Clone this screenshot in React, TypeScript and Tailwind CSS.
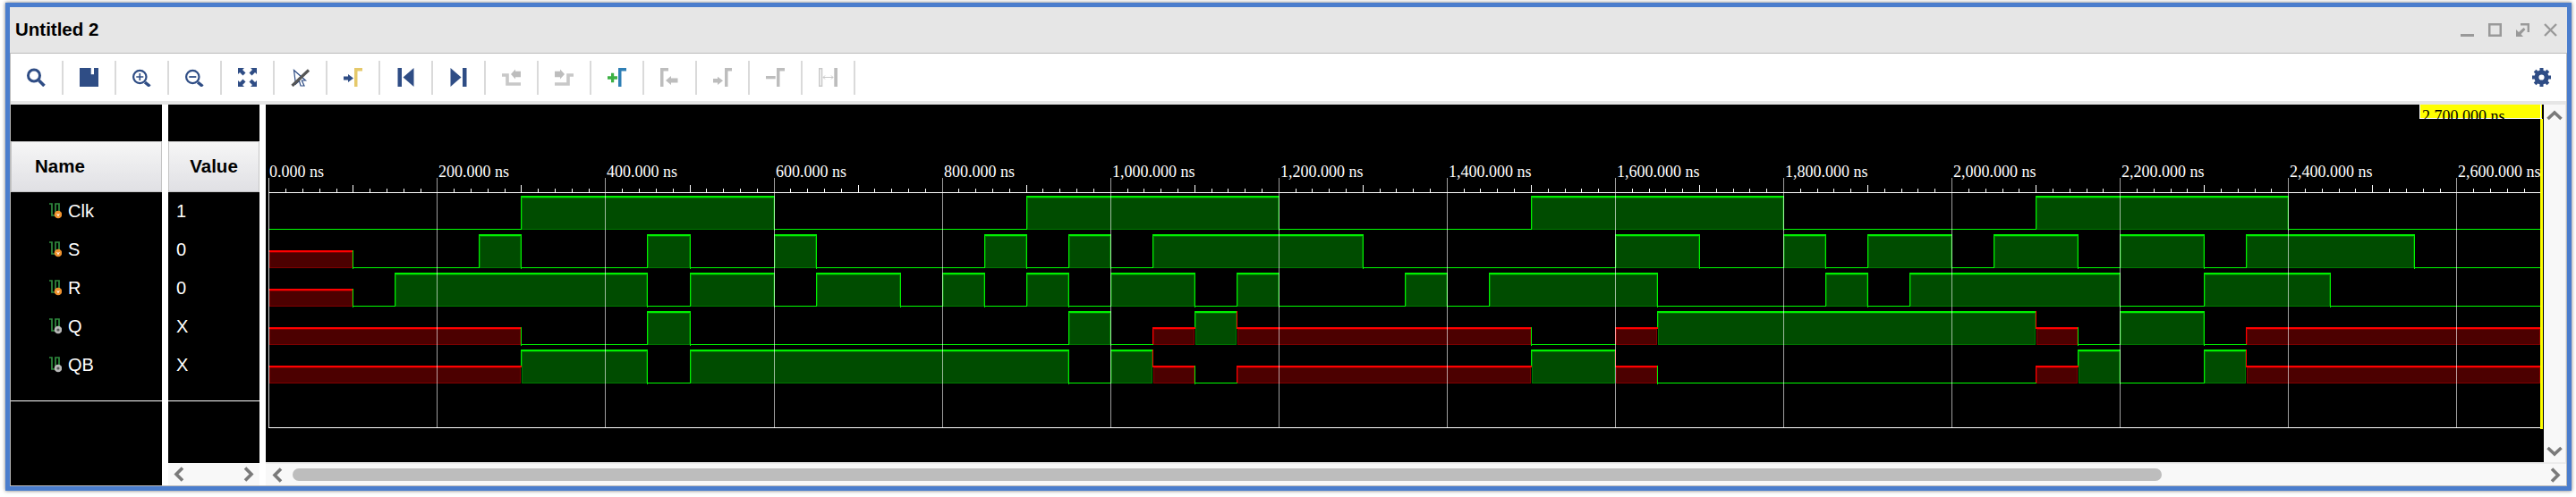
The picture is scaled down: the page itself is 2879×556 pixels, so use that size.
import type { ReactNode } from 'react';

type State = '0' | '1' | 'x';
type Edge = [number, State];

const NAVY = '#2f4d85';
const GRAY = '#bdbdbd';

// edges are [time in ns, new value]
const clk: Edge[] = [
  [0, '0'], [300, '1'], [600, '0'], [900, '1'], [1200, '0'], [1500, '1'], [1800, '0'], [2100, '1'], [2400, '0'],
];
const s: Edge[] = [
  [0, 'x'], [100, '0'], [250, '1'], [300, '0'], [450, '1'], [500, '0'], [600, '1'], [650, '0'], [850, '1'],
  [900, '0'], [950, '1'], [1000, '0'], [1050, '1'], [1300, '0'], [1600, '1'], [1700, '0'], [1800, '1'],
  [1850, '0'], [1900, '1'], [2000, '0'], [2050, '1'], [2150, '0'], [2200, '1'], [2300, '0'], [2350, '1'], [2550, '0'],
];
const r: Edge[] = [
  [0, 'x'], [100, '0'], [150, '1'], [450, '0'], [500, '1'], [600, '0'], [650, '1'], [750, '0'], [800, '1'],
  [850, '0'], [900, '1'], [950, '0'], [1000, '1'], [1100, '0'], [1150, '1'], [1200, '0'], [1350, '1'],
  [1400, '0'], [1450, '1'], [1650, '0'], [1850, '1'], [1900, '0'], [1950, '1'], [2200, '0'], [2300, '1'], [2450, '0'],
];
const q: Edge[] = [
  [0, 'x'], [300, '0'], [450, '1'], [500, '0'], [950, '1'], [1000, '0'], [1050, 'x'], [1100, '1'], [1150, 'x'],
  [1500, '0'], [1600, 'x'], [1650, '1'], [2100, 'x'], [2150, '0'], [2200, '1'], [2300, '0'], [2350, 'x'],
];
const qb: Edge[] = [
  [0, 'x'], [300, '1'], [450, '0'], [500, '1'], [950, '0'], [1000, '1'], [1050, 'x'], [1100, '0'], [1150, 'x'],
  [1500, '1'], [1600, 'x'], [1650, '0'], [2100, 'x'], [2150, '1'], [2200, '0'], [2300, '1'], [2350, 'x'],
];

const signals = [
  { name: 'Clk', value: '1', edges: clk, input: true },
  { name: 'S', value: '0', edges: s, input: true },
  { name: 'R', value: '0', edges: r, input: true },
  { name: 'Q', value: 'X', edges: q, input: false },
  { name: 'QB', value: 'X', edges: qb, input: false },
];

const END = 2700;
const tx = (t: number) => Math.floor(3.8 + t * 0.9404);

const majors = Array.from({ length: 14 }, (_, i) => i * 200);
const ticks = Array.from({ length: 135 }, (_, i) => i * 20 + 20);

function formatTime(t: number) {
  return `${t.toLocaleString('en-US')}.000 ns`;
}

function Trace({ edges, index }: { edges: Edge[]; index: number }) {
  const top = 103 + index * 43;
  const low = top + 36.5;
  const mid = top + 18;
  const level = (v: State) => (v === '1' ? top : v === '0' ? low : mid);

  return (
    <g>
      {edges.map(([t, v], i) => {
        const x1 = tx(t);
        const x2 = tx(i + 1 < edges.length ? edges[i + 1][0] : END);
        const prev = i > 0 ? edges[i - 1][1] : null;
        const bright = v === 'x' ? '#ff0000' : '#00f000';
        return (
          <g key={t}>
            {v === '1' && <rect x={x1 + 1.5} y={top + 1} width={x2 - x1 - 2} height={35} fill="#004c00" stroke="#007800" />}
            {v === 'x' && <rect x={x1 + 1.5} y={mid + 1} width={x2 - x1 - 2} height={17} fill="#4c0000" stroke="#800000" />}
            {v === '0' ? (
              <line x1={x1} x2={x2 + 1} y1={low} y2={low} stroke="#00ff00" />
            ) : (
              <line x1={x1} x2={x2 + 1} y1={level(v)} y2={level(v)} stroke={bright} strokeWidth={2} />
            )}
            {prev && prev !== v && (
              <line x1={x1 + 0.5} x2={x1 + 0.5} y1={level(prev) - 1} y2={level(v) + 1} stroke={bright} />
            )}
          </g>
        );
      })}
    </g>
  );
}

function WaveChart() {
  return (
    <svg width={2546} height={400} className="block shrink-0 bg-black" shapeRendering="crispEdges">
      {signals.map((sig, i) => (
        <Trace key={sig.name} edges={sig.edges} index={i} />
      ))}
      {majors.map((t) => (
        <line key={t} x1={tx(t) + 0.5} x2={tx(t) + 0.5} y1={82} y2={362} stroke="#fff" strokeOpacity={t === 0 ? 0.85 : 0.62} />
      ))}
      {ticks.map((t) =>
        t % 200 === 0 ? null : (
          <line key={t} x1={tx(t) + 0.5} x2={tx(t) + 0.5} y1={t % 100 === 0 ? 90 : 94} y2={98} stroke="#fff" />
        ),
      )}
      <line x1={3} x2={2542} y1={98.5} y2={98.5} stroke="#fff" />
      <line x1={3} x2={2542} y1={361.5} y2={361.5} stroke="#fff" />
      {majors.map((t) => (
        <text
          key={t}
          x={tx(t) + (t === 0 ? 1 : 2)}
          y={81}
          className="fill-white font-['Liberation_Serif'] text-[18px]"
          textRendering="optimizeSpeed"
        >
          {formatTime(t)}
        </text>
      ))}
      <rect x={2542} y={16} width={3} height={347} fill="#ffff00" />
      <svg x={2407} y={0} width={137} height={16}>
        <rect width={137} height={16} fill="#ffff00" />
        <rect width={1} height={16} fill="#fff" />
        <rect y={15} width={137} height={1} fill="#fff" />
        <rect x={135} width={1} height={16} fill="#fff" />
        <text x={3} y={19} className="fill-black font-['Liberation_Serif'] text-[18px]">
          2,700.000 ns
        </text>
      </svg>
    </svg>
  );
}

function Ic({ children }: { children: ReactNode }) {
  return (
    <svg width={21} height={21} viewBox="0 0 21 21">
      {children}
    </svg>
  );
}

const GAMMA_RIGHT = 'M12 0H21V3.5H15.5V21H12Z';

const tools: ReactNode[] = [
  <Ic>
    <circle cx={8} cy={8.5} r={6.5} fill="none" stroke={NAVY} strokeWidth={3} />
    <path d="M13.5 14L19.5 20" stroke={NAVY} strokeWidth={3.5} />
  </Ic>,
  <Ic>
    <path d="M0 0H21V21H0Z" fill={NAVY} />
    <rect x={12.7} width={3.3} height={7.2} fill="#fff" />
  </Ic>,
  <Ic>
    <circle cx={8.3} cy={10} r={7.2} fill="none" stroke={NAVY} strokeWidth={2.2} />
    <path d="M4.3 10H12.3M8.3 6V14" stroke={NAVY} strokeWidth={1.6} />
    <path d="M14 16L19.5 20.5" stroke={NAVY} strokeWidth={3.5} />
  </Ic>,
  <Ic>
    <circle cx={8.3} cy={10} r={7.2} fill="none" stroke={NAVY} strokeWidth={2.2} />
    <path d="M4.3 10H12.3" stroke={NAVY} strokeWidth={1.8} />
    <path d="M14 16L19.5 20.5" stroke={NAVY} strokeWidth={3.5} />
  </Ic>,
  <Ic>
    {[0, 90, 180, 270].map((a) => (
      <path key={a} d="M0 0H7L5 2L8.5 5.5L5.5 8.5L2 5L0 7Z" fill={NAVY} transform={`rotate(${a} 10.5 10.5)`} />
    ))}
  </Ic>,
  <Ic>
    <path d="M3.5 2.5L16.5 14H12.3L15 20H11L9.5 14.5L5.5 18Z" fill="#fff" stroke={NAVY} strokeWidth={1.2} />
    <path d="M1.5 20L20 2.5" stroke="#555" strokeWidth={3.2} />
  </Ic>,
  <Ic>
    <path d="M0 9.5H5V7L11 11.5L5 16V13.5H0Z" fill={NAVY} />
    <path d={GAMMA_RIGHT} fill="#e5c96b" />
  </Ic>,
  <Ic>
    <rect x={1.5} width={4.5} height={21} fill={NAVY} />
    <path d="M19.5 0V21L7.5 10.5Z" fill={NAVY} />
  </Ic>,
  <Ic>
    <path d="M1.5 0V21L13.5 10.5Z" fill={NAVY} />
    <rect x={15} width={4.5} height={21} fill={NAVY} />
  </Ic>,
  <Ic>
    <path d="M0 8H6V18H21" fill="none" stroke="#c8c8c8" strokeWidth={3.6} />
    <path d="M10 7L15 1.5V3.7H21V10.3H15V12.5Z" fill={GRAY} />
  </Ic>,
  <Ic>
    <g transform="translate(21 0) scale(-1 1)">
      <path d="M0 8H6V18H21" fill="none" stroke="#c8c8c8" strokeWidth={3.6} />
      <path d="M10 7L15 1.5V3.7H21V10.3H15V12.5Z" fill={GRAY} />
    </g>
  </Ic>,
  <Ic>
    <path d="M4 5.7H7.2V9.3H11V12.7H7.2V16.3H4V12.7H0V9.3H4Z" fill="#3cb043" />
    <path d={GAMMA_RIGHT} fill="#2f7fb5" />
  </Ic>,
  <Ic>
    <path d="M0 0H9V3.5H3.5V21H0Z" fill={GRAY} />
    <path d="M6 14L12 9V11.5H19.5V16.5H12V19Z" fill={GRAY} />
  </Ic>,
  <Ic>
    <path d="M0 12H5V9.7L11 14.3L5 19V16.5H0Z" fill={GRAY} />
    <path d="M13 0H21V3.5H16.5V21H13Z" fill={GRAY} />
  </Ic>,
  <Ic>
    <rect y={9} width={10.7} height={3.3} fill={GRAY} />
    <path d={GAMMA_RIGHT} fill={GRAY} />
  </Ic>,
  <Ic>
    <rect x={0.75} y={0.75} width={2.8} height={19.5} fill="#fff" stroke="#c8c8c8" strokeWidth={1.5} />
    <rect x={17.3} width={3.7} height={21} fill={GRAY} />
    <path d="M5 10.5H16M7 8.5L5 10.5L7 12.5M14 8.5L16 10.5L14 12.5" fill="none" stroke="#c8c8c8" />
  </Ic>,
];

function Gear() {
  return (
    <Ic>
      <circle cx={10.5} cy={10.5} r={5.6} fill="none" stroke={NAVY} strokeWidth={5} />
      {[0, 45, 90, 135, 180, 225, 270, 315].map((a) => (
        <rect key={a} x={8.5} y={0} width={4} height={4} fill={NAVY} transform={`rotate(${a} 10.5 10.5)`} />
      ))}
    </Ic>
  );
}

function Chevron({ dir }: { dir: 'left' | 'right' | 'up' | 'down' }) {
  if (dir === 'left' || dir === 'right') {
    return (
      <svg width={12} height={17} viewBox="0 0 12 17" className="shrink-0">
        <path d={dir === 'left' ? 'M10 1.5L3 8.5L10 15.5' : 'M2 1.5L9 8.5L2 15.5'} fill="none" stroke="#7a7a7a" strokeWidth={3.6} />
      </svg>
    );
  }
  return (
    <svg width={18} height={12} viewBox="0 0 18 12" className="shrink-0">
      <path d={dir === 'up' ? 'M1.5 10L9 3L16.5 10' : 'M1.5 2L9 9L16.5 2'} fill="none" stroke="#7a7a7a" strokeWidth={3.6} />
    </svg>
  );
}

function PortIcon({ input }: { input: boolean }) {
  return (
    <svg width={15} height={18} viewBox="0 0 15 18" className="shrink-0">
      <path d="M1 1H4V14H8V1H12V13" fill="none" stroke="#2f8b3e" strokeWidth={1.7} />
      <circle cx={11} cy={13} r={4.3} fill={input ? '#f0922e' : '#b8b8b8'} />
      {input ? (
        <path d="M9.7 12L11 14.6L12.3 12" fill="none" stroke="#fff" strokeWidth={0.9} />
      ) : (
        <circle cx={11} cy={13} r={1.6} fill="#555" />
      )}
    </svg>
  );
}

function ColumnHeader({ className, children }: { className: string; children: ReactNode }) {
  return (
    <div
      className={`flex h-[57px] items-center border border-[#c4c4c4] bg-linear-to-b from-[#f6f6f6] to-[#e0e0e4] pb-px text-[20.5px] font-bold text-black ${className}`}
    >
      {children}
    </div>
  );
}

export default function App() {
  return (
    <div className="h-[556px] w-[2879px] bg-white pb-[7px] pl-[6px] pr-[5px] pt-[3px] font-['Liberation_Sans',sans-serif]">
      <div className="flex h-full flex-col border-[5px] border-[#4a7dcd] shadow-[0_0_4px_rgba(0,0,0,0.55)]">
        <div className="flex h-[52px] shrink-0 items-center border-b border-[#bbbbbb] bg-[#e6e6e6] pl-[6px] pr-[11px]">
          <span className="text-[20.5px] font-bold text-black">Untitled 2</span>
          <div className="ml-auto flex items-center gap-4">
            <svg width={15} height={15} viewBox="0 0 15 15">
              <rect y={12} width={15} height={3} fill="#999" />
            </svg>
            <svg width={15} height={15} viewBox="0 0 15 15">
              <rect x={1.25} y={1.25} width={12.5} height={12.5} fill="none" stroke="#999" strokeWidth={2.5} />
            </svg>
            <svg width={15} height={15} viewBox="0 0 15 15">
              <path d="M5 1.2H13.8V10" fill="none" stroke="#999" strokeWidth={2.4} />
              <path d="M0 7V15H8L5.5 12.3L10.5 7L8.5 5L3 10Z" fill="#999" />
            </svg>
            <svg width={15} height={15} viewBox="0 0 15 15">
              <path d="M1 1L14 14M14 1L1 14" stroke="#999" strokeWidth={2.4} />
            </svg>
          </div>
        </div>

        <div className="flex min-h-0 flex-1 flex-col border-x border-b border-[#bbbbbb] bg-white">
          <div className="flex h-[53px] shrink-0 items-center">
            {tools.map((icon, i) => (
              <div key={i} className="flex items-center">
                <div className="flex w-[57px] justify-center">{icon}</div>
                <div className="h-[38px] w-[2px] bg-[#dadada]" />
              </div>
            ))}
            <div className="ml-auto pr-[17px]">
              <Gear />
            </div>
          </div>
          <div className="h-1 shrink-0 bg-[#e6e6e6]" />

          <div className="flex min-h-0 flex-1">
            {/* names */}
            <div className="flex w-[169px] shrink-0 flex-col bg-black">
              <div className="h-[41px] shrink-0" />
              <ColumnHeader className="pl-[26px]">Name</ColumnHeader>
              <div className="border-b border-white pb-[18px]">
                {signals.map((sig) => (
                  <div key={sig.name} className="flex h-[43px] items-center gap-[7px] pb-px pl-[42px] text-[20px] text-white">
                    <PortIcon input={sig.input} />
                    <span>{sig.name}</span>
                  </div>
                ))}
              </div>
            </div>

            {/* values */}
            <div className="ml-[7px] flex w-[102px] shrink-0 flex-col">
              <div className="flex min-h-0 flex-1 flex-col bg-black">
                <div className="h-[41px] shrink-0" />
                <ColumnHeader className="justify-center">Value</ColumnHeader>
                <div className="border-b border-white pb-[18px]">
                  {signals.map((sig) => (
                    <div key={sig.name} className="flex h-[43px] items-center pb-px pl-[9px] text-[20px] text-white">
                      {sig.value}
                    </div>
                  ))}
                </div>
              </div>
              <div className="flex h-[25px] shrink-0 items-center justify-between bg-[#f8f8f8] px-[6px]">
                <Chevron dir="left" />
                <Chevron dir="right" />
              </div>
            </div>

            {/* waveform */}
            <div className="ml-[7px] flex min-w-0 flex-1 flex-col">
              <div className="flex h-[400px] shrink-0">
                <WaveChart />
                <div className="flex flex-1 flex-col items-center justify-between border-r border-[#e6e6e6] bg-[#f8f8f8] py-[6px]">
                  <Chevron dir="up" />
                  <Chevron dir="down" />
                </div>
              </div>
              <div className="flex min-h-0 flex-1 items-center border-t-2 border-[#ececec] bg-[#f8f8f8] pl-[7px] pr-[6px]">
                <Chevron dir="left" />
                <div className="ml-[11px] h-[14px] w-[2089px] rounded-[7px] bg-[#bdbdbd]" />
                <div className="ml-auto">
                  <Chevron dir="right" />
                </div>
              </div>
            </div>
          </div>
        </div>
      </div>
    </div>
  );
}
